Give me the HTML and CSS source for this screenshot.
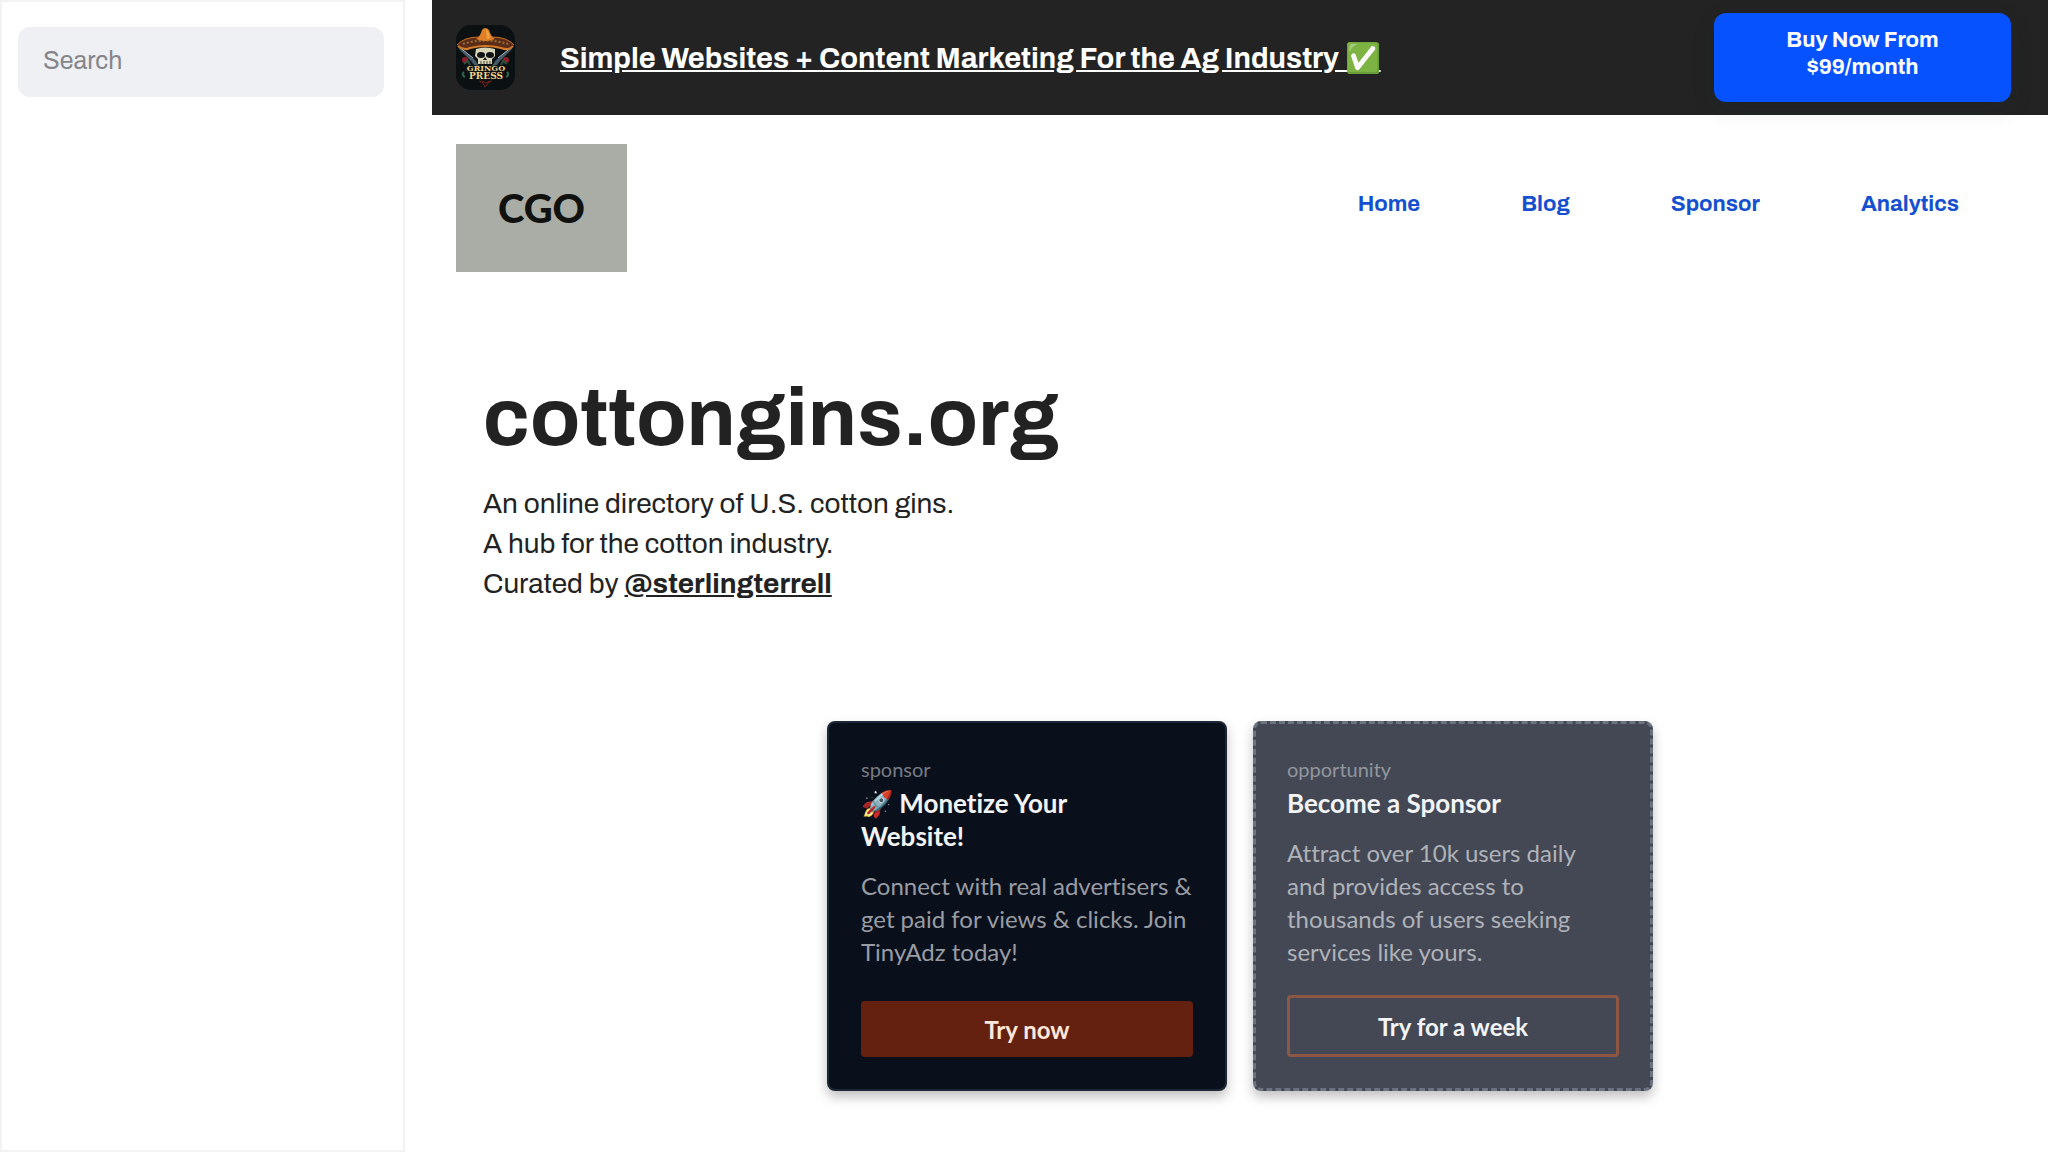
FILE: index.html
```
<!DOCTYPE html>
<html lang="en">
<head>
    <meta charset="UTF-8">
    <meta name="viewport" content="width=device-width, initial-scale=1.0">
    <title>cottongins.org</title>
    <link rel="stylesheet" href="styles.css">
</head>
<body>

    <div class="layout">
        <!-- Sidebar -->
        <aside class="sidebar">
            <input type="search" class="search-input" placeholder="Search" aria-label="Search">
        </aside>

        <div class="main">
            <!-- Top banner -->
            <div class="banner">
                <svg class="banner-icon" viewBox="0 0 59 65" role="img" aria-label="Gringo Press">
                    <rect width="59" height="65" rx="15" fill="#0b1012"/>
                    <!-- crossed pistols -->
                    <path d="M2 21 19 35 23 41 18 40 15 36 3 24Z" fill="#465b68"/>
                    <path d="M57 21 40 35 36 41 41 40 44 36 56 24Z" fill="#465b68"/>
                    <path d="M2 21 17 33M57 21 42 33" stroke="#a9bcc2" stroke-width="1"/>
                    <!-- roses -->
                    <circle cx="9" cy="35" r="3" fill="#8c1f2b"/>
                    <circle cx="50" cy="35" r="3" fill="#8c1f2b"/>
                    <path d="M8 39 12 36 14 40M51 39 47 36 45 40" stroke="#2d4e3c" stroke-width="2" fill="none"/>
                    <!-- skull -->
                    <path d="M20 24Q29 21 39 24L39 31 36 34 36 39 22 39 22 34 19 31Z" fill="#d8d4b8"/>
                    <ellipse cx="25" cy="30" rx="4" ry="3" fill="#101415"/>
                    <ellipse cx="34" cy="30" rx="4" ry="3" fill="#101415"/>
                    <path d="M29 32 27 35H31Z" fill="#101415"/>
                    <path d="M25 36V39M28 36V39M31 36V39M34 36V39" stroke="#4a483d" stroke-width="1"/>
                    <!-- sombrero -->
                    <path d="M1 20Q8 12 23 12H36Q51 12 58 20 54 26 45 23 30 19 14 23 5 26 1 20Z" fill="#5b2c18"/>
                    <path d="M1 20Q8 12 23 12H36Q51 12 58 20" fill="none" stroke="#c96f22" stroke-width="1"/>
                    <path d="M2 21Q8 26 14 23 30 19 45 23 53 26 57 21" fill="none" stroke="#d37b27" stroke-width="2"/>
                    <path d="M7 19Q29 12 52 19" fill="none" stroke="#9c7036" stroke-width="2" stroke-dasharray="2 2"/>
                    <path d="M20 14Q24 12 26 5 29 1 33 5 35 12 39 14 29 18 20 14Z" fill="#df8027"/>
                    <path d="M30 4Q33 6 34 13L31 14Z" fill="#f1a043"/>
                    <text x="30" y="46" class="icon-text icon-text-top">GRINGO</text>
                    <text x="30" y="54" class="icon-text">PRESS</text>
                    <path d="M23 56 27 58 29 62 32 58 36 56M26 56 30 58 34 56" fill="none" stroke="#7d201c" stroke-width="1"/>
                    <path d="M8 47Q5 50 9 52M51 47Q54 50 50 52" fill="none" stroke="#2e6550" stroke-width="2"/>
                </svg>
                <a href="#" class="banner-link">Simple Websites + Content Marketing For the Ag Industry ✅</a>
                <button type="button" class="buy-button">Buy Now From $99/month</button>
            </div>

            <!-- Header -->
            <header class="header">
                <a href="#" class="logo">CGO</a>
                <nav class="nav">
                    <a href="#">Home</a>
                    <a href="#">Blog</a>
                    <a href="#">Sponsor</a>
                    <a href="#">Analytics</a>
                </nav>
            </header>

            <!-- Hero -->
            <section class="hero">
                <h1>cottongins.org</h1>
                <p>An online directory of U.S. cotton gins.<br>
                A hub for the cotton industry.<br>
                Curated by <a href="#">@sterlingterrell</a></p>
            </section>

            <!-- Sponsor cards -->
            <section class="cards">
                <div class="card">
                    <span class="card-label">sponsor</span>
                    <h2>🚀 Monetize Your Website!</h2>
                    <p>Connect with real advertisers &amp; get paid for views &amp; clicks. Join TinyAdz today!</p>
                    <button type="button" class="card-button">Try now</button>
                </div>
                <div class="card card-open">
                    <span class="card-label">opportunity</span>
                    <h2>Become a Sponsor</h2>
                    <p>Attract over 10k users daily and provides access to thousands of users seeking services like yours.</p>
                    <button type="button" class="card-button card-button-outline">Try for a week</button>
                </div>
            </section>
        </div>
    </div>

</body>
</html>
```
FILE: styles.css
```
* {
    box-sizing: border-box;
}

body {
    margin: 0;
    font-family: Archivo, "Liberation Sans", Arial, sans-serif;
    color: #222;
    background-color: #fff;
}

.layout {
    display: flex;
    gap: 27px;
    min-height: 100vh;
}

/* Sidebar */
.sidebar {
    flex: 0 0 405px;
    padding: 25px 19px 25px 16px;
    border: 2px solid #f2f2f2;
}

.search-input {
    width: 100%;
    height: 70px;
    padding: 0 25px 4px;
    border: none;
    border-radius: 12px;
    background-color: #eff0f4;
    font-family: inherit;
    font-size: 25px;
    appearance: none;
}

.search-input::placeholder {
    color: #85868a;
}

.main {
    flex: 1;
    min-width: 0;
}

/* Top banner */
.banner {
    display: flex;
    align-items: center;
    height: 115px;
    padding: 0 37px 0 24px;
    background-color: #232323;
}

.banner-icon {
    flex: none;
    width: 59px;
    height: 65px;
    margin-right: 45px;
}

.icon-text {
    font-family: "DejaVu Serif", serif;
    font-size: 9px;
    font-weight: bold;
    text-anchor: middle;
    fill: #f0d48a;
}

.icon-text-top {
    font-size: 8px;
}

.banner-link {
    color: #fff;
    font-size: 29px;
    font-weight: bold;
}

.buy-button {
    width: 297px;
    height: 89px;
    margin-left: auto;
    padding: 0 64px 7px;
    border: none;
    border-radius: 12px;
    background-color: #0652ff;
    box-shadow: 0 8px 24px rgba(20, 40, 60, 0.1);
    color: #fff;
    font-family: inherit;
    font-size: 22px;
    font-weight: bold;
    line-height: 27px;
    cursor: pointer;
}

/* Header */
.header {
    display: flex;
    justify-content: space-between;
    padding: 29px 89px 0 24px;
}

.logo {
    display: flex;
    align-items: center;
    justify-content: center;
    width: 171px;
    height: 128px;
    background-color: #a9ada6;
    color: #11110f;
    font-family: Lato, sans-serif;
    font-size: 40px;
    font-weight: 900;
    text-decoration: none;
}

.nav {
    display: flex;
    align-items: center;
    gap: 101px;
    padding-bottom: 8px;
}

.nav a {
    color: #1550cf;
    font-size: 22px;
    font-weight: bold;
    text-decoration: none;
}

/* Hero */
.hero {
    padding: 96px 51px 0;
}

.hero h1 {
    margin: 0 0 16px;
    font-size: 82px;
    line-height: 100px;
}

.hero p {
    margin: 0;
    font-size: 28px;
    line-height: 40px;
}

.hero a {
    color: inherit;
    font-weight: bold;
}

/* Cards */
.cards {
    display: flex;
    justify-content: center;
    gap: 26px;
    padding: 117px 24px 60px;
    font-family: Lato, sans-serif;
    font-variant-ligatures: none;
}

.card {
    display: flex;
    flex-direction: column;
    width: 400px;
    min-height: 370px;
    padding: 32px;
    border: 2px solid #1c2837;
    border-radius: 8px;
    background-color: #0a101b;
    box-shadow: 0 6px 12px rgba(0, 0, 0, 0.25);
}

.card-open {
    border: 3px dashed #6b7280;
    padding: 31px;
    background-color: #434854;
}

.card-label {
    color: #777b84;
    font-size: 20px;
    line-height: 28px;
}

.card-open .card-label {
    color: #92969e;
}

.card h2 {
    margin: 4px 0 16px;
    padding-right: 32px;
    color: #f3f4f6;
    font-size: 26px;
    font-weight: bold;
    line-height: 33px;
}

.card p {
    margin: 0;
    color: #989ca4;
    font-size: 24px;
    line-height: 33px;
}

.card-open p {
    color: #afb2b9;
}

.card-button {
    height: 56px;
    margin-top: auto;
    border: none;
    border-radius: 4px;
    background-color: #65210f;
    color: #fde8dc;
    font-family: inherit;
    font-size: 24px;
    font-weight: bold;
    cursor: pointer;
}

.card-button-outline {
    height: 62px;
    border: 3px solid #8c5744;
    background-color: transparent;
    color: #f3f4f6;
}
```
